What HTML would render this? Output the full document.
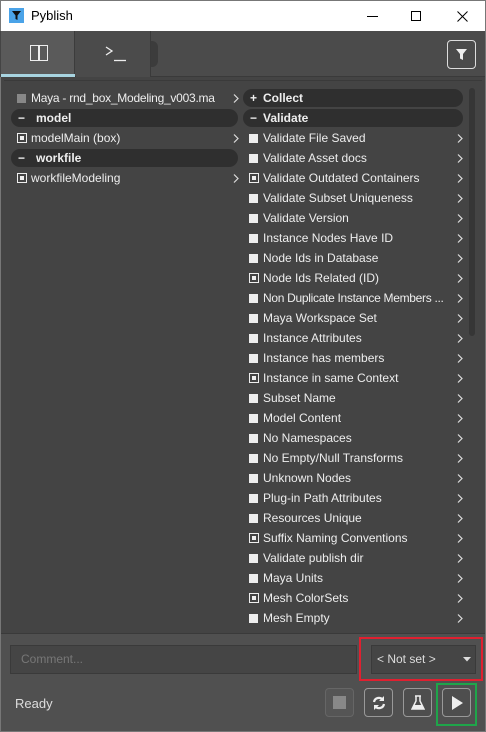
<!DOCTYPE html>
<html><head><style>
*{margin:0;padding:0;box-sizing:border-box}
body{width:486px;height:732px;background:#444;font-family:"Liberation Sans",sans-serif;font-size:12px;color:#eee;position:relative;overflow:hidden}
.abs{position:absolute}
.title{left:0;top:0;width:486px;height:31px;background:#fff;border:1px solid #777;border-bottom:none}
.tabbar{left:1px;top:31px;width:484px;height:46px;background:#4b4b4b;border-bottom:1px solid #3a3a3a}
.row{position:absolute;height:18px;line-height:18px;white-space:nowrap}
.pill{position:absolute;height:18px;line-height:18px;background:#2f2f2f;border-radius:9px;font-weight:bold;color:#eee}
.cb{position:absolute;width:9px;height:9px;background:#eee;top:5px}
.cb.o{background:#444;border:1.5px solid #eee;width:10px;height:10px;top:4px}
.cb.o::after{content:"";position:absolute;left:1.5px;top:1.5px;width:4px;height:4px;background:#eee}
.cb.g{background:#888}
.arr{position:absolute;top:5px;width:6px;height:9px}
.btn{position:absolute;top:688px;width:29px;height:29px;border:1px solid #999;border-radius:4px;background:#4e4e4e}
</style></head><body>
<div class="abs title">
  <div class="abs" style="left:8px;top:7px;width:15px;height:15px;background:#4aa3e8"></div>
  <svg class="abs" style="left:10px;top:9px" width="11" height="11" viewBox="0 0 11 11"><path d="M1 1h9L6.5 5.5V10L4.5 9V5.5z" fill="#111"/></svg>
  <div class="abs" style="left:30px;top:7px;color:#000;font-size:13px">Pyblish</div>
  <div class="abs" style="left:366px;top:15px;width:11px;height:1px;background:#000"></div>
  <div class="abs" style="left:410px;top:10px;width:10px;height:10px;border:1px solid #000"></div>
  <svg class="abs" style="left:456px;top:10px" width="11" height="11"><path d="M0.5 0.5L10.5 10.5M10.5 0.5L0.5 10.5" stroke="#000" stroke-width="1"/></svg>
</div>
<div class="abs tabbar">
  <div class="abs" style="left:0;top:0;width:74px;height:46px;background:#5a5a5a;border-right:1px solid #3c3c3c"></div>
  <div class="abs" style="left:0;top:43px;width:74px;height:3px;background:#a8d4e0"></div>
  <div class="abs" style="left:29px;top:14px;width:18px;height:16px;border:1.5px solid #eee"></div>
  <div class="abs" style="left:37px;top:14px;width:1.5px;height:16px;background:#eee"></div>
  <div class="abs" style="left:75px;top:0;width:75px;height:46px;background:#4b4b4b;border-right:1px solid #3a3a3a"></div>
  <div class="abs" style="left:150px;top:10px;width:7px;height:26px;background:#3c3c3c;border-radius:0 6px 6px 0"></div>
  <svg class="abs" style="left:104px;top:15px" width="22" height="16"><path d="M1 1L7 5L1 9" stroke="#eee" stroke-width="1.3" fill="none"/><path d="M9 14.5h12" stroke="#eee" stroke-width="1.3"/></svg>
  <div class="abs" style="left:446px;top:9px;width:29px;height:29px;border:1px solid #ddd;border-radius:4px"></div>
  <svg class="abs" style="left:454px;top:17px" width="13" height="13" viewBox="0 0 13 13"><path d="M1 1h11L8 6v6L5 10.5V6z" fill="#eee"/></svg>
</div>
<div class="abs" style="left:0;top:77px;width:1px;height:655px;background:#777"></div>
<div class="abs" style="left:485px;top:31px;width:1px;height:701px;background:#777"></div>
<div class="abs" style="left:0;top:731px;width:486px;height:1px;background:#777"></div>
<div class="abs" style="left:4px;top:80px;width:478px;height:552px;background:#444;border-top:1px solid #3a3a3a"></div>

<svg width="0" height="0" style="position:absolute"><defs><symbol id="ch" viewBox="0 0 6 9"><path d="M1 0.5L5 4.5L1 8.5" stroke="#ddd" stroke-width="1.2" fill="none"/></symbol></defs></svg>

<!-- left -->
<div class="row" style="left:17px;top:89px;width:222px"><span class="cb g" style="left:0"></span><span style="position:absolute;left:14px;letter-spacing:-0.25px">Maya - rnd_box_Modeling_v003.ma</span><svg class="arr" style="left:216px"><use href="#ch"/></svg></div>
<div class="pill" style="left:11px;top:109px;width:227px"><span style="position:absolute;left:7px">−</span><span style="position:absolute;left:25px">model</span></div>
<div class="row" style="left:17px;top:129px;width:222px"><span class="cb o" style="left:0"></span><span style="position:absolute;left:14px">modelMain (box)</span><svg class="arr" style="left:216px"><use href="#ch"/></svg></div>
<div class="pill" style="left:11px;top:149px;width:227px"><span style="position:absolute;left:7px">−</span><span style="position:absolute;left:25px">workfile</span></div>
<div class="row" style="left:17px;top:169px;width:222px"><span class="cb o" style="left:0"></span><span style="position:absolute;left:14px">workfileModeling</span><svg class="arr" style="left:216px"><use href="#ch"/></svg></div>

<!-- right -->
<div class="pill" style="left:243px;top:89px;width:220px"><span style="position:absolute;left:7px">+</span><span style="position:absolute;left:20px">Collect</span></div>
<div class="pill" style="left:243px;top:109px;width:220px"><span style="position:absolute;left:7px">−</span><span style="position:absolute;left:20px">Validate</span></div>
<div id="r"></div>
<div class="abs" style="left:469px;top:88px;width:6px;height:248px;background:#363636;border-radius:3px"></div>

<!-- bottom -->
<div class="abs" style="left:1px;top:633px;width:484px;height:98px;background:#505050;border-top:1px solid #3a3a3a"></div>
<div class="abs" style="left:10px;top:645px;width:347px;height:29px;background:#454545;border:1px solid #3a3a3a;color:#777;line-height:27px;padding-left:10px">Comment...</div>
<div class="abs" style="left:371px;top:645px;width:105px;height:29px;background:#454545;border:1px solid #3a3a3a;color:#ddd;line-height:27px;padding-left:5px">&lt; Not set &gt;</div>
<svg class="abs" style="left:463px;top:657px" width="8" height="5"><path d="M0 0h8L4 4.5z" fill="#ddd"/></svg>
<div class="abs" style="left:359px;top:637px;width:124px;height:44px;border:2px solid #e02030"></div>
<div class="abs" style="left:15px;top:696px;color:#ddd;font-size:13px">Ready</div>
<div class="btn" style="left:325px;border-color:#666;background:#555"><div class="abs" style="left:7px;top:7px;width:13px;height:13px;background:#888"></div></div>
<div class="btn" style="left:364px"><svg class="abs" style="left:6px;top:6px" width="16" height="16" viewBox="0 0 16 16"><path d="M3 7a5 5 0 0 1 9-2M13 9a5 5 0 0 1-9 2" stroke="#eee" stroke-width="2.2" fill="none"/><path d="M13 1v5H8z M3 15v-5h5z" fill="#eee"/></svg></div>
<div class="btn" style="left:403px"><svg class="abs" style="left:7px;top:6px" width="14" height="16" viewBox="0 0 14 16"><path d="M4 1h6M5 1v5L1 14h12L9 6V1" stroke="#eee" stroke-width="1.5" fill="none"/><path d="M3 10h8l2 4H1z" fill="#eee"/></svg></div>
<div class="btn" style="left:442px"><svg class="abs" style="left:8px;top:7px" width="13" height="14"><path d="M1 0L12 7L1 14z" fill="#eee"/></svg></div>
<div class="abs" style="left:436px;top:683px;width:41px;height:43px;border:2px solid #1fa54a"></div>

<script>
var items=[["Validate File Saved",0],["Validate Asset docs",0],["Validate Outdated Containers",1],["Validate Subset Uniqueness",0],["Validate Version",0],["Instance Nodes Have ID",0],["Node Ids in Database",0],["Node Ids Related (ID)",1],["Non Duplicate Instance Members ...",0],["Maya Workspace Set",0],["Instance Attributes",0],["Instance has members",0],["Instance in same Context",1],["Subset Name",0],["Model Content",0],["No Namespaces",0],["No Empty/Null Transforms",0],["Unknown Nodes",0],["Plug-in Path Attributes",0],["Resources Unique",0],["Suffix Naming Conventions",1],["Validate publish dir",0],["Maya Units",0],["Mesh ColorSets",1],["Mesh Empty",0]];
var h="";items.forEach(function(it,i){h+='<div class="row" style="left:249px;top:'+(129+i*20)+'px;width:215px"><span class="cb'+(it[1]?' o':'')+'" style="left:0"></span><span style="position:absolute;left:14px;'+(i==8?'letter-spacing:-0.3px':'')+'">'+it[0]+'</span><svg class="arr" style="left:208px"><use href="#ch"/></svg></div>';});
document.getElementById("r").innerHTML=h;
</script>
</body></html>
